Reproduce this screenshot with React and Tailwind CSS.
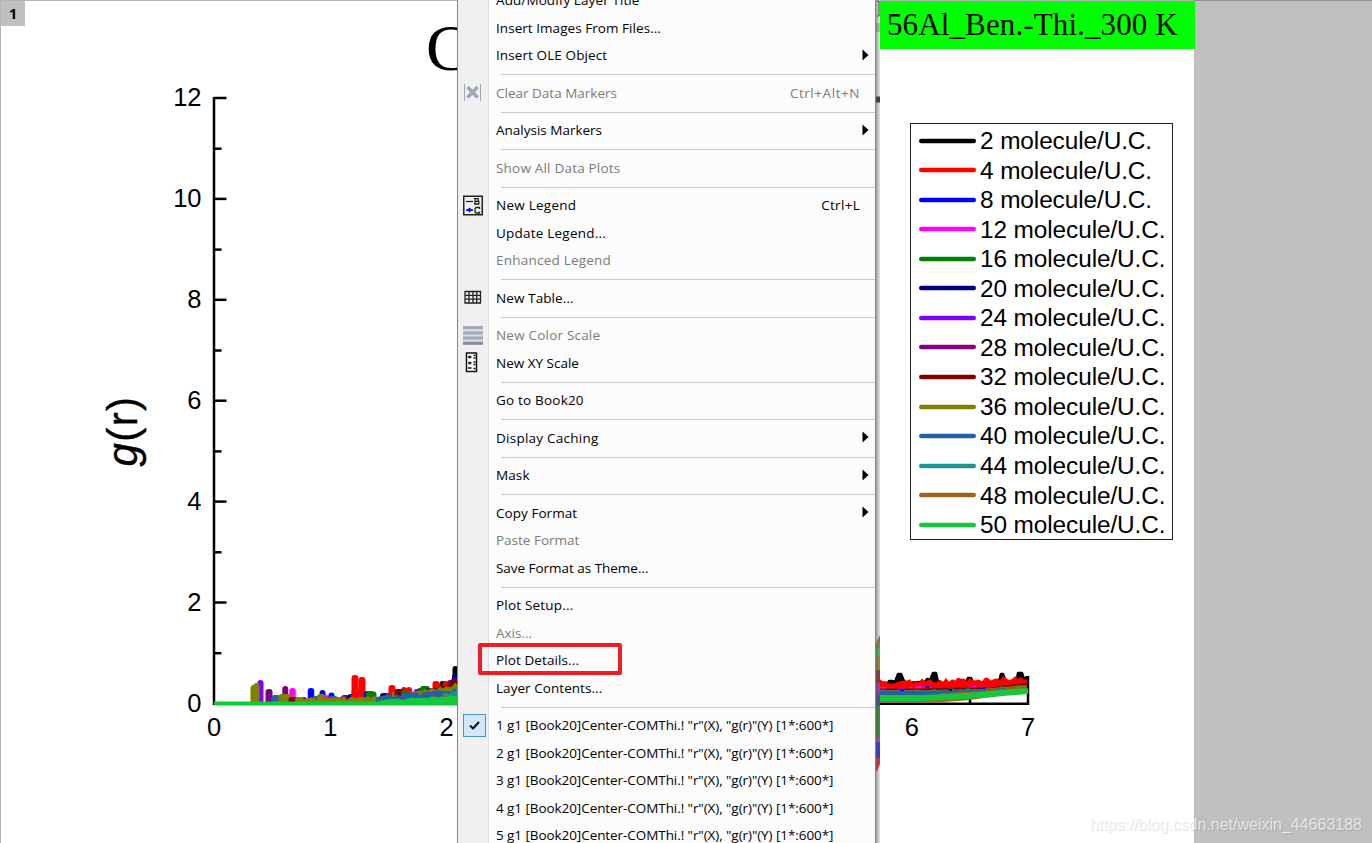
import { Fragment } from "react";

const groups = [
  [
    { label: "Add/Modify Layer Title", track: "tracking-[0.1px]" },
    { label: "Insert Images From Files...", track: "tracking-[0.05px]" },
    { label: "Insert OLE Object", arrow: true, track: "tracking-[0.1px]" },
  ],
  [{ label: "Clear Data Markers", keys: "Ctrl+Alt+N", off: true, icon: "clear", track: "tracking-[0px]" }],
  [{ label: "Analysis Markers", arrow: true, track: "tracking-[0px]" }],
  [{ label: "Show All Data Plots", off: true, track: "tracking-[0.2px]" }],
  [
    { label: "New Legend", keys: "Ctrl+L", icon: "legend", track: "tracking-[0.25px]" },
    { label: "Update Legend...", track: "tracking-[0.22px]" },
    { label: "Enhanced Legend", off: true, track: "tracking-[0.22px]" },
  ],
  [{ label: "New Table...", icon: "table", track: "tracking-[0.1px]" }],
  [
    { label: "New Color Scale", off: true, icon: "color", track: "tracking-[0.2px]" },
    { label: "New XY Scale", icon: "xy", track: "tracking-[0px]" },
  ],
  [{ label: "Go to Book20", track: "tracking-[0.2px]" }],
  [{ label: "Display Caching", arrow: true, track: "tracking-[0.25px]" }],
  [{ label: "Mask", arrow: true, track: "tracking-[0.1px]" }],
  [
    { label: "Copy Format", arrow: true, track: "tracking-[0.05px]" },
    { label: "Paste Format", off: true, track: "tracking-[0px]" },
    { label: "Save Format as Theme...", track: "tracking-[-0.03px]" },
  ],
  [
    { label: "Plot Setup...", track: "tracking-[0.2px]" },
    { label: "Axis...", off: true, track: "tracking-[0px]" },
    { label: "Plot Details...", marked: true, track: "tracking-[0.1px]" },
    { label: "Layer Contents...", track: "tracking-[0.05px]" },
  ],
  [1, 2, 3, 4, 5].map((n) => ({
    label: `${n} g1 [Book20]Center-COMThi.! "r"(X), "g(r)"(Y) [1*:600*]`,
    icon: n === 1 ? "check" : null,
    track: "tracking-[-0.07px]",
  })),
];

const series = [
  ["2", "#000000"],
  ["4", "#ff0000"],
  ["8", "#0000ff"],
  ["12", "#ff00ff"],
  ["16", "#008000"],
  ["20", "#000080"],
  ["24", "#8000ff"],
  ["28", "#800080"],
  ["32", "#800000"],
  ["36", "#808000"],
  ["40", "#2660a4"],
  ["44", "#1c9494"],
  ["48", "#996619"],
  ["50", "#14c83c"],
];

// x, top, width, color
const peaks = [
  [260.5, 681, 6, "#8000ff"],
  [254, 686, 7, "#808000"],
  [256.5, 684, 6, "#808000"],
  [269, 690, 7, "#800080"],
  [276, 696, 9, "#2660a4"],
  [285, 687, 5.5, "#800080"],
  [283, 695, 9, "#808000"],
  [292.5, 689, 6.5, "#ff00ff"],
  [288, 695, 8, "#808000"],
  [293, 698, 9, "#800000"],
  [299, 698, 8, "#808000"],
  [304, 698, 6, "#800080"],
  [311, 689, 6.5, "#0000ff"],
  [316, 697, 7, "#2660a4"],
  [322.5, 691, 6, "#0000ff"],
  [321, 695, 8, "#808000"],
  [326, 696, 6, "#ff00ff"],
  [331.5, 693.5, 6, "#0000ff"],
  [333, 697, 10, "#2660a4"],
  [340, 698, 9, "#808000"],
  [346, 696, 10, "#800080"],
  [351, 695, 7, "#000080"],
  [355, 676, 7, "#ff0000"],
  [362, 678, 7, "#ff0000"],
  [358, 690, 13, "#ff0000"],
  [366, 692, 4, "#0000ff"],
  [370, 692, 8, "#008000"],
  [373, 692.5, 7, "#008000"],
  [384, 694, 8, "#000080"],
  [388, 694, 5, "#0000ff"],
  [392, 686, 7, "#ff0000"],
  [396, 692, 8, "#808000"],
  [404, 688, 6, "#ff0000"],
  [409, 688, 6, "#ff0000"],
  [399, 690, 9, "#800000"],
  [404, 691, 6, "#008000"],
  [413, 693, 8, "#000080"],
  [417, 690, 7, "#8000ff"],
  [420, 689, 6, "#800080"],
  [425, 687, 10, "#008000"],
  [430, 689, 8, "#800080"],
  [436, 682, 7, "#ff0000"],
  [442, 682, 5, "#000000"],
  [445, 682, 5, "#ff0000"],
  [450, 681, 6, "#800080"],
  [455, 667, 5, "#000000"],
  [455, 675, 6, "#000080"],
  [454, 680, 8, "#800000"],
];

// small deterministic wobble for the noisy bands
const wobble = (i, seed) => {
  const v = Math.sin(i * 12.9898 + seed * 78.233) * 43758.5453;
  return v - Math.floor(v);
};

function band(x0, x1, y0, y1, amp, seed, bottom = 703) {
  const pts = [];
  for (let x = x0; x <= x1; x += 3) {
    const t = (x - x0) / (x1 - x0);
    pts.push(`${x},${(y0 + (y1 - y0) * t - wobble(x, seed) * amp).toFixed(1)}`);
  }
  return `${x0},${bottom} ${pts.join(" ")} ${x1},${bottom}`;
}

function Chart() {
  const yTicks = [12, 10, 8, 6, 4, 2, 0];
  return (
    <svg width="1194" height="843" className="absolute left-0 top-0" fontFamily="Liberation Sans" fontSize="25.5">
      <text x="426" y="69.5" fontFamily="Liberation Serif" fontSize="66">C</text>
      <g stroke="#000" strokeWidth="2.5">
        <path d="M214 97V705" />
        {yTicks.map((n, i) => (
          <path key={n} d={`M214 ${98 + i * 100.9}h12.5`} />
        ))}
        {[0, 1, 2, 3, 4, 5].map((i) => (
          <path key={i} d={`M214 ${148.7 + i * 100.9}h7.5`} />
        ))}
      </g>
      {yTicks.map((n, i) => (
        <text key={n} x="201.5" y={106.3 + i * 100.9} textAnchor="end">{n}</text>
      ))}
      {[0, 1, 2, 6, 7].map((n) => (
        <text key={n} x={214 + n * 116.3} y="736" textAnchor="middle">{n}</text>
      ))}
      <text transform="translate(136.5 466.5) rotate(-90)" fontSize="42" letterSpacing="1.4" stroke="#000" strokeWidth="0.4">
        <tspan fontStyle="italic">g</tspan>(r)
      </text>

      {peaks.map(([x, top, w, color], i) => (
        <path
          key={i}
          d={`M${x - w / 2} 703V${top + 2}q0 -3 3 -3h${w - 6 > 0 ? w - 6 : 0}q3 0 3 3V703z`}
          fill={color}
        />
      ))}
      <polygon points={band(416, 458, 694, 684, 3, 3)} fill="#800000" />
      <polygon points={band(407, 458, 696, 686, 4, 4)} fill="#808000" />
      <polygon points={band(360, 458, 701, 693, 5, 5)} fill="#2660a4" />
      <polygon points={band(296, 400, 701, 699, 4, 9)} fill="#808000" />
      <polygon points={band(376, 458, 700, 692, 5, 6)} fill="#2660a4" />
      <polygon points={band(440, 458, 699, 690, 4, 2)} fill="#1c9494" />
      <polygon points={band(432, 458, 700, 697, 4, 8)} fill="#996619" />
      <path d="M214 703.5H458" stroke="#14c83c" strokeWidth="4" />
      <polygon points={band(380, 458, 701, 697, 2, 7, 704)} fill="#14c83c" />

      <path d="M876 703.7H1029M970 704v-7M1028 705V676" stroke="#000" strokeWidth="2.5" fill="none" />
      <g fill="none" strokeLinejoin="round">
        <path
          d="M880 683L888 683 889 681 892 681 895 682 898 674 901 674 904 681 908 683 920 682 925 682 927 679 930 680 933 673 936 673 938 682 945 684 958 683 966 682 968 678 971 678 974 684 985 684 995 682 999 681 1001 674 1003 674 1006 682 1012 681 1017 679 1018 673 1022 673 1024 679 1027 677V686H880z"
          fill="#000"
          stroke="#000"
          strokeWidth="2.5"
        />
        <polygon points={band(880, 1027, 684, 680, 5, 21, 692)} fill="#ff0000" />
        <path d="M880 688l20 1 20-2 15 2 20 0 20-2 20 1 20-2 12-2" stroke="#ff00ff" strokeWidth="2" strokeDasharray="7 5 2 4" />
        <path d="M880 690l40 0 40-1 30 0 37-5" stroke="#800000" strokeWidth="3" />
        <path d="M881 690l40 0 40-1 30-1 36-3" stroke="#008000" strokeWidth="2" strokeDasharray="4 13" />
        <path d="M880 691l50 0 50-1 47-4" stroke="#808000" strokeWidth="2" />
        <path d="M880 693l50 0 50-1 47-3" stroke="#2660a4" strokeWidth="5" />
        <path d="M900 690h4M926 687h3M949 690h3M982 688h3" stroke="#0000ff" strokeWidth="2" />
        <path d="M880 701l55 0 30-2 30-4 32-6" stroke="#996619" strokeWidth="3" />
        <path d="M940 694l40-2 47-5" stroke="#996619" strokeWidth="2" />
        <path d="M880 698l40 0 30-1 30-2 48-4" stroke="#14c83c" strokeWidth="6" />
      </g>
    </svg>
  );
}

function Icon({ name }) {
  if (name === "check") {
    return (
      <span className="flex size-[23px] items-center justify-center border border-[#3c96dc] bg-[#d2e6f6]">
        <svg width="11" height="9" viewBox="0 0 11 9" fill="none" stroke="#111" strokeWidth="2">
          <path d="M1 4.5L4 7.5 10 1" />
        </svg>
      </span>
    );
  }
  return (
    <svg width="21" height="21" viewBox="0 0 21 21" fill="none">
      {name === "clear" && (
        <g stroke="#a0a7b8">
          <path d="M1.5 2V19M17.5 2V19" />
          <path d="M4.5 5L14.5 15.5M14.5 5L4.5 15.5" strokeWidth="3.5" />
        </g>
      )}
      {name === "legend" && (
        <g>
          <path d="M.75 1.25h18.5v18.5H.75z" stroke="#222" strokeWidth="1.5" />
          <path d="M3 6.5h7" stroke="#222" strokeWidth="1.3" />
          <path d="M3 15h7" stroke="#00f" strokeWidth="1.5" />
          <path d="M6.5 12.5L9 15 6.5 17.5 4 15z" fill="#00f" />
          <path d="M12 3.5V9M11 3.7h4.2v2.6H12M15.2 6.3h.6V9H11" stroke="#222" strokeWidth="1.3" />
          <path d="M16.5 14v-1.5h-3.5l-1 1v3.5l1 1h3.5V16.5" stroke="#222" strokeWidth="1.3" />
        </g>
      )}
      {name === "table" && (
        <path d="M2 4.5h15.5v11.5H2zM2 8.3h15.5M2 12.2h15.5M6 4.5V16M10 4.5V16M13.7 4.5V16" stroke="#222" strokeWidth="1.3" />
      )}
      {name === "color" && (
        <g>
          <path d="M0 1h20v19H0z" fill="#d5d9e0" />
          <path d="M0 2.5h20M0 8h20M0 13h20" stroke="#a3aabb" strokeWidth="3" />
          <path d="M0 18.3h20" stroke="#858c9d" strokeWidth="3" />
        </g>
      )}
      {name === "xy" && (
        <g stroke="#111">
          <path d="M3.5 1h10v18.5h-10z" fill="#fff" strokeWidth="1.5" />
          <path d="M5 5h3.5M7 3.5v3M5 11h3.5M7 9.5v3M5 16h3.5M10.5 3.5h2M10.5 6h2M10.5 10h2M10.5 12.5h2M10.5 16.5h2" strokeWidth="1.3" />
        </g>
      )}
    </svg>
  );
}

function MenuRow({ item }) {
  const tone = item.off ? "text-[#7b7b7b]" : "text-black";
  return (
    <div className="relative flex h-[27.5px] items-center">
      <span className="flex w-[38px] shrink-0 pl-[5px]">{item.icon && <Icon name={item.icon} />}</span>
      <span className={`whitespace-pre pb-[0.5px] ${item.track} ${tone}`}>{item.label}</span>
      {item.keys && (
        <span className={`ml-auto pb-[0.5px] pr-[15px] ${item.off ? "tracking-[0.55px]" : "tracking-[0.3px]"} ${tone}`}>
          {item.keys}
        </span>
      )}
      {item.arrow && (
        <svg className="mb-px ml-auto mr-[6px]" width="7" height="12">
          <path d="M0.5 0.5L6.5 6 0.5 11.5z" fill="#000" />
        </svg>
      )}
      {item.marked && (
        <span className="absolute -top-[3.5px] left-[20px] h-[32px] w-[144px] rounded-[2px] border-4 border-[#ee1c25]" />
      )}
    </div>
  );
}

function ContextMenu() {
  return (
    <div className="absolute left-[457px] top-0 h-[843px] w-[419px] overflow-hidden border-x border-[#858585] bg-[#fcfcfc] font-['Open_Sans',sans-serif] text-[13.5px] leading-5">
      <div className="absolute inset-y-0 left-0 w-[31px] border-r border-[#dcdcdc] bg-[#f0f0f0]" />
      <div className="relative -mt-[13.35px]">
        {groups.map((items, i) => (
          <Fragment key={i}>
            {i > 0 && (
              <div className="flex h-[10px] items-center pl-[43px] pt-px">
                <div className="h-px w-full bg-[#cbcbcb]" />
              </div>
            )}
            {items.map((item) => (
              <MenuRow key={item.label} item={item} />
            ))}
          </Fragment>
        ))}
      </div>
    </div>
  );
}

// slice of the curves seen through the menu's drop shadow
function MenuShadow() {
  return (
    <svg className="absolute left-[876px] top-0" width="4" height="843">
      <defs>
        <linearGradient id="shade">
          <stop offset="0" stopColor="#555" stopOpacity="0.6" />
          <stop offset="1" stopColor="#777" stopOpacity="0.2" />
        </linearGradient>
      </defs>
      <rect width="4" height="843" fill="#fff" />
      <path d="M1 1h2v15h-2" stroke="#333" fill="none" />
      <path d="M0 23h4v9H0z" fill="#c4c4e0" />
      <path d="M0 96.5h4v6H0z" fill="#402020" />
      <g opacity="0.85">
        <path d="M1 641L4 635V644H1z" fill="#2660a4" />
        <path d="M0 642h4v7H0z" fill="#996619" />
        <path d="M0 648h4v9H0z" fill="#14c83c" />
        <path d="M0 656h4v14H0z" fill="#808000" />
        <path d="M0 670h4v13H0z" fill="#800000" />
        <path d="M0 683h4v12H0z" fill="#8c0ab4" />
        <path d="M0 695h4v11H0z" fill="#202080" />
        <path d="M0 706h4v31H0z" fill="#008000" />
        <path d="M0 737h4v5H0z" fill="#d000f0" />
        <path d="M0 742h4v16H0z" fill="#0000ff" />
        <path d="M0 758h4v6L1 771H0z" fill="#ee0000" />
      </g>
      <rect width="4" height="843" fill="url(#shade)" />
    </svg>
  );
}

function Legend() {
  return (
    <div className="absolute left-[910px] top-[123px] flex h-[417px] w-[263px] flex-col border border-[#222] bg-white pl-[8px] pt-[2px] font-['Liberation_Sans',sans-serif] text-[24.4px] tracking-[-0.1px] text-black">
      {series.map(([n, color]) => (
        <div key={n} className="flex h-[29.54px] items-center gap-1">
          <svg width="57" height="6" className="shrink-0">
            <path d="M2.3 3H54.7" stroke={color} strokeWidth="4.6" strokeLinecap="round" />
          </svg>
          <span className="whitespace-nowrap pt-[1.4px]">{n} molecule/U.C.</span>
        </div>
      ))}
    </div>
  );
}

export default function App() {
  return (
    <div className="relative flex h-[843px] w-[1372px] overflow-hidden bg-[#c0c0c0]">
      <main className="w-[1194px] border-l border-t border-[#b4b4b4] bg-white">
        <div className="flex h-[25px] w-[24px] items-center justify-center bg-[#c0c0c0] font-['Open_Sans',sans-serif] text-[15px] font-bold text-black">
          1
        </div>
      </main>
      <aside className="flex-1 border-t border-[#909090]" />
      <Chart />
      <div className="absolute left-[880px] top-px flex h-[48px] w-[315px] items-center bg-[#00ff00] pl-[7px] font-['Liberation_Serif',serif] text-[31px] tracking-[0.12px] text-black">
        <span className="whitespace-nowrap">56Al_Ben.-Thi._300 K</span>
      </div>
      <Legend />
      <MenuShadow />
      <ContextMenu />
      <div className="absolute bottom-[8px] right-[10px] whitespace-nowrap font-['Liberation_Sans',sans-serif] text-[16px] leading-5 text-white/65 [text-shadow:1px_1px_1px_rgba(0,0,0,0.14)]">
        https://blog.csdn.net/weixin_44663188
      </div>
    </div>
  );
}
